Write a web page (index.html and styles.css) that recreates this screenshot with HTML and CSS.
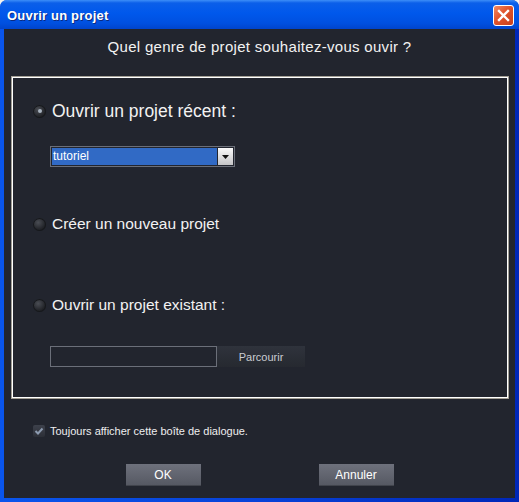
FILE: index.html
```html
<!DOCTYPE html>
<html lang="fr">
<head>
  <meta charset="UTF-8" />
  <title>Ouvrir un projet</title>
  <link rel="stylesheet" href="styles.css">
</head>
<body>
  <div class="window">
    <div class="titlebar">
      <span class="title">Ouvrir un projet</span>
      <button class="close" aria-label="Fermer">
        <svg width="13" height="13" viewBox="0 0 13 13">
          <path d="M2 2 L11 11 M11 2 L2 11" stroke="#fff" stroke-width="2.4" stroke-linecap="square" />
        </svg>
      </button>
    </div>

    <div class="content">
      <h1>Quel genre de projet souhaitez-vous ouvir ?</h1>

      <div class="group">
        <label class="option big">
          <span class="radio checked"></span>
          Ouvrir un projet récent :
        </label>
        <div class="select">
          <span class="select-value">tutoriel</span>
          <span class="select-btn">
            <svg width="7" height="4" viewBox="0 0 7 4"><path d="M0 0 H7 L3.5 4 Z" fill="#111" /></svg>
          </span>
        </div>

        <label class="option row2">
          <span class="radio"></span>
          Créer un nouveau projet
        </label>

        <label class="option row3">
          <span class="radio"></span>
          Ouvrir un projet existant :
        </label>
        <div class="browse">
          <input type="text" class="path" />
          <button class="browse-btn">Parcourir</button>
        </div>
      </div>

      <label class="check-row">
        <span class="checkbox">
          <svg width="10" height="9" viewBox="0 0 10 9"><path d="M1.5 4 L4 6.5 L8.5 1.5" stroke="#8d9bb0" stroke-width="2" fill="none" /></svg>
        </span>
        Toujours afficher cette boîte de dialogue.
      </label>

      <div class="actions">
        <button class="btn">OK</button>
        <button class="btn">Annuler</button>
      </div>
    </div>
  </div>
</body>
</html>
```

FILE: styles.css
```css
* {
  box-sizing: border-box;
}
html, body {
  margin: 0;
  padding: 0;
  background: #f4f3ee;
  font-family: 'Liberation Sans', Arial, sans-serif;
}
.window {
  width: 519px;
  height: 502px;
  display: flex;
  flex-direction: column;
  background: linear-gradient(90deg, #0a55ec 0, #0842d8 50%, #0027b8 100%);
  border-radius: 7px 7px 0 0;
  overflow: hidden;
}
.titlebar {
  height: 29px;
  flex: none;
  display: flex;
  align-items: center;
  justify-content: space-between;
  padding: 0 5px 0 7px;
  background: linear-gradient(#3d8ef8 0, #0b5fe9 3px, #0058ec 45%, #0050e0 80%, #0044cc 100%);
}
.title {
  color: #fff;
  font-weight: 700;
  font-size: 13px;
  letter-spacing: 0.2px;
  text-shadow: 1px 1px 0 #0b2a80;
  margin-top: 2px;
}
.close {
  width: 21px;
  height: 21px;
  padding: 0;
  border: 1px solid #fff;
  border-radius: 3px;
  background: linear-gradient(135deg, #f08a64, #e0532c 45%, #c8401c);
  display: flex;
  align-items: center;
  justify-content: center;
  margin-top: 1px;
}
.content {
  flex: 1;
  display: flex;
  flex-direction: column;
  margin: 0 4px 4px 4px;
  background: #22252e;
}
h1 {
  margin: 9px 0 0 0;
  font-size: 15px;
  line-height: 18px;
  font-weight: 400;
  letter-spacing: 0.3px;
  text-align: center;
  color: #f2f2f2;
}
.group {
  margin: 21px 7px 0 8px;
  border: 1px solid #fff;
  box-shadow: 0 0 0 1px #a39f95;
  padding: 23px 20px 30px 20px;
  display: flex;
  flex-direction: column;
  align-items: flex-start;
}
.option {
  display: flex;
  align-items: center;
  gap: 6px;
  height: 20px;
  color: #f2f2f2;
  font-size: 15.5px;
}
.option.big {
  font-size: 17.5px;
}
.row2 {
  margin-top: 47px;
}
.row3 {
  margin-top: 61px;
}
.radio {
  width: 13px;
  height: 13px;
  border-radius: 50%;
  background: radial-gradient(circle at 40% 35%, #4a4d54 0, #25272c 55%, #0c0d10 100%);
  box-shadow: inset 0 0 0 1px #16181c;
  display: flex;
  align-items: center;
  justify-content: center;
}
.radio.checked::after {
  content: "";
  width: 4px;
  height: 4px;
  border-radius: 50%;
  background: #a9b4c0;
}
.select {
  margin: 25px 0 0 17px;
  width: 185px;
  height: 21px;
  border: 1px solid #6b6f79;
  padding: 1px;
  display: flex;
  background: #22252e;
}
.select-value {
  flex: 1;
  background: #316ac5;
  color: #fff;
  font-size: 12px;
  line-height: 17px;
  padding-left: 1px;
}
.select-btn {
  width: 15px;
  margin-left: 1px;
  background: linear-gradient(#fafafa, #c4c4c6);
  display: flex;
  align-items: center;
  justify-content: center;
}
.browse {
  margin: 31px 0 0 17px;
  display: flex;
  height: 21px;
}
.path {
  width: 167px;
  height: 21px;
  border: 1px solid #6b6f79;
  background: #22252e;
  margin: 0;
  padding: 0;
}
.browse-btn {
  width: 88px;
  height: 21px;
  border: none;
  background: linear-gradient(#2f333c, #262930);
  color: #c9ccd2;
  font-family: inherit;
  font-size: 11px;
  padding: 0;
}
.check-row {
  margin: 25px 0 0 29px;
  display: flex;
  align-items: center;
  gap: 5px;
  height: 16px;
  color: #eeeeee;
  font-size: 11px;
}
.checkbox {
  width: 12px;
  height: 12px;
  border-radius: 2px;
  background: linear-gradient(#3d414b, #2c2f37);
  display: flex;
  align-items: center;
  justify-content: center;
}
.actions {
  margin-top: 25px;
  display: flex;
  justify-content: center;
  gap: 118px;
}
.btn {
  width: 75px;
  height: 22px;
  border: none;
  border-bottom: 1px solid #41444c;
  background: linear-gradient(#6e717c, #565963);
  color: #fff;
  font-family: inherit;
  font-size: 12px;
  padding: 0;
}
```
